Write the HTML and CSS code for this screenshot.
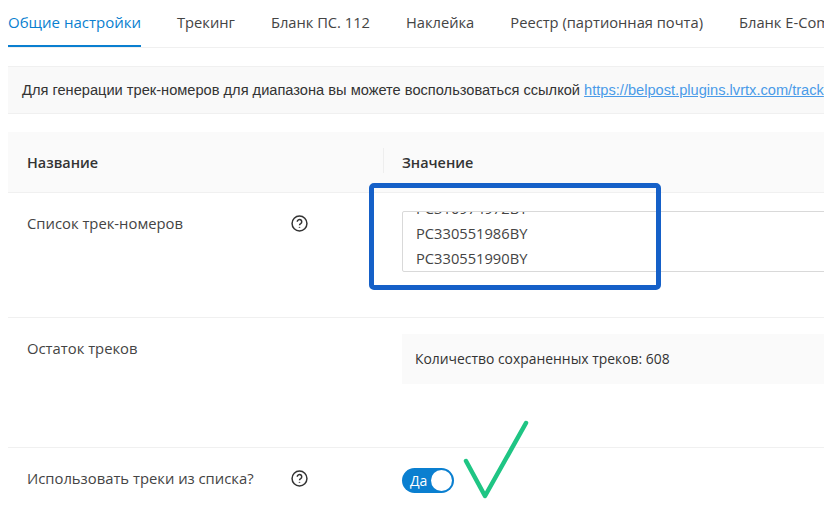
FILE: index.html
```html
<!DOCTYPE html>
<html lang="ru">
<head>
    <meta charset="UTF-8">
    <title>Общие настройки</title>
    <link rel="stylesheet" href="styles.css">
</head>
<body>
    <div class="tabs">
        <div class="tab active">Общие настройки</div>
        <div class="tab">Трекинг</div>
        <div class="tab">Бланк ПС. 112</div>
        <div class="tab">Наклейка</div>
        <div class="tab">Реестр (партионная почта)</div>
        <div class="tab">Бланк E-Com</div>
    </div>

    <div class="notice">
        Для генерации трек-номеров для диапазона вы можете воспользоваться ссылкой
        <a href="#">https://belpost.plugins.lvrtx.com/track</a>
    </div>

    <div class="table">
        <div class="row head">
            <div class="cell-name">Название</div>
            <div class="cell-value">Значение</div>
        </div>

        <div class="row row-tracks">
            <div class="cell-name">
                <span>Список трек-номеров</span>
                <svg class="help" viewBox="0 0 16 16"><circle cx="8" cy="8" r="7" /><path d="M5.9 6.3a2.1 2.1 0 1 1 3.2 1.8c-.7.4-1.1.8-1.1 1.5" /><path d="M8 11.2v.8" /></svg>
            </div>
            <div class="cell-value">
                <div class="track-box">
                    <div class="track-list">
                        <div>PC310974972BY</div>
                        <div>PC330551986BY</div>
                        <div>PC330551990BY</div>
                    </div>
                </div>
            </div>
        </div>

        <div class="row row-rest">
            <div class="cell-name"><span>Остаток треков</span></div>
            <div class="cell-value">
                <div class="rest-box">Количество сохраненных треков: 608</div>
            </div>
        </div>

        <div class="row row-switch">
            <div class="cell-name">
                <span>Использовать треки из списка?</span>
                <svg class="help" viewBox="0 0 16 16"><circle cx="8" cy="8" r="7" /><path d="M5.9 6.3a2.1 2.1 0 1 1 3.2 1.8c-.7.4-1.1.8-1.1 1.5" /><path d="M8 11.2v.8" /></svg>
            </div>
            <div class="cell-value">
                <div class="switch"><span>Да</span><i></i></div>
            </div>
        </div>
    </div>

    <!-- пометки поверх скриншота -->
    <div class="mark-box"></div>
    <svg class="mark-check" viewBox="0 0 70 84"><path d="M3 41 L22 76 L63 3" /></svg>
</body>
</html>
```

FILE: styles.css
```css
html, body {
    height: 510px;
    overflow: hidden;
}
body {
    margin: 0;
    position: relative;
    font-family: "Open Sans", "Noto Sans", sans-serif;
    font-size: 14px;
    color: #333;
    background: #fff;
}
.tabs {
    display: flex;
    gap: 36px;
    height: 48px;
    margin-left: 8px;
    border-bottom: 1px solid #f0f0f0;
    box-sizing: border-box;
    white-space: nowrap;
    overflow: hidden;
}
.tab {
    font-size: 14.7px;
    line-height: 44px;
    color: #444;
    flex: none;
}
.tab.active {
    color: #0a7fd0;
    font-size: 15px;
    height: 48px;
    border-bottom: 3px solid #0a7fd0;
    box-sizing: border-box;
}
.notice {
    margin: 18px 0 18px 8px;
    height: 48px;
    padding-left: 14px;
    box-sizing: border-box;
    background: #f9f9f9;
    border-top: 1px solid #f0f0f0;
    border-bottom: 1px solid #f0f0f0;
    font-family: "Liberation Sans", Arial, sans-serif;
    font-size: 14.63px;
    line-height: 46px;
    white-space: nowrap;
    overflow: hidden;
}
.notice a {
    color: #4a9be8;
}
.table {
    margin-left: 8px;
}
.row {
    display: grid;
    grid-template-columns: 394px 600px;
    border-bottom: 1px solid #f0f0f0;
    box-sizing: border-box;
}
.head {
    height: 61px;
    background: #fafafa;
    align-items: center;
    font-size: 14.4px;
    font-weight: 600;
    color: #333;
}
.head .cell-value {
    position: relative;
}
.head .cell-value::before {
    content: "";
    position: absolute;
    left: -19px;
    top: -5px;
    height: 25px;
    border-left: 1px solid #eee;
}
.cell-name {
    display: flex;
    justify-content: space-between;
    padding: 0 94px 0 19px;
    color: #444;
    font-size: 14.8px;
}
.head .cell-name {
    color: #333;
    font-size: 14.4px;
}
.row-tracks {
    height: 125px;
    padding-top: 20px;
}
.row-tracks .cell-value {
    margin-top: -2px;
}
.row-rest {
    height: 130px;
    padding-top: 20px;
}
.row-rest .cell-value {
    margin-top: -4px;
}
.row-switch {
    height: 70px;
    padding-top: 20px;
}
.help {
    width: 17px;
    height: 17px;
    margin-top: 2px;
    fill: none;
    stroke: #333;
    stroke-width: 1.4;
}
.track-box {
    height: 61px;
    border: 1px solid #d9d9d9;
    border-radius: 2px;
    box-sizing: border-box;
    overflow: hidden;
    padding-left: 13px;
}
.track-list {
    margin-top: -16px;
    line-height: 25px;
    font-size: 14.7px;
    color: #444;
}
.rest-box {
    height: 50px;
    padding-left: 13px;
    background: #fafafa;
    font-size: 13.9px;
    line-height: 50px;
    color: #333;
}
.switch {
    display: flex;
    align-items: center;
    justify-content: space-between;
    width: 52px;
    height: 25px;
    padding: 0 2px 0 8px;
    box-sizing: border-box;
    background: #0a7fd0;
    border-radius: 13px;
    color: #fff;
    font-size: 14px;
    font-weight: 500;
}
.switch i {
    width: 21px;
    height: 21px;
    background: #fff;
    border-radius: 50%;
}
.mark-box {
    position: absolute;
    left: 369px;
    top: 183px;
    width: 292px;
    height: 107px;
    box-sizing: border-box;
    border: 5px solid #1560c8;
    border-radius: 5px;
}
.mark-check {
    position: absolute;
    left: 463px;
    top: 420px;
    width: 70px;
    height: 84px;
    fill: none;
    stroke: #1fc584;
    stroke-width: 4.5;
    stroke-linecap: round;
    stroke-linejoin: round;
}
```
